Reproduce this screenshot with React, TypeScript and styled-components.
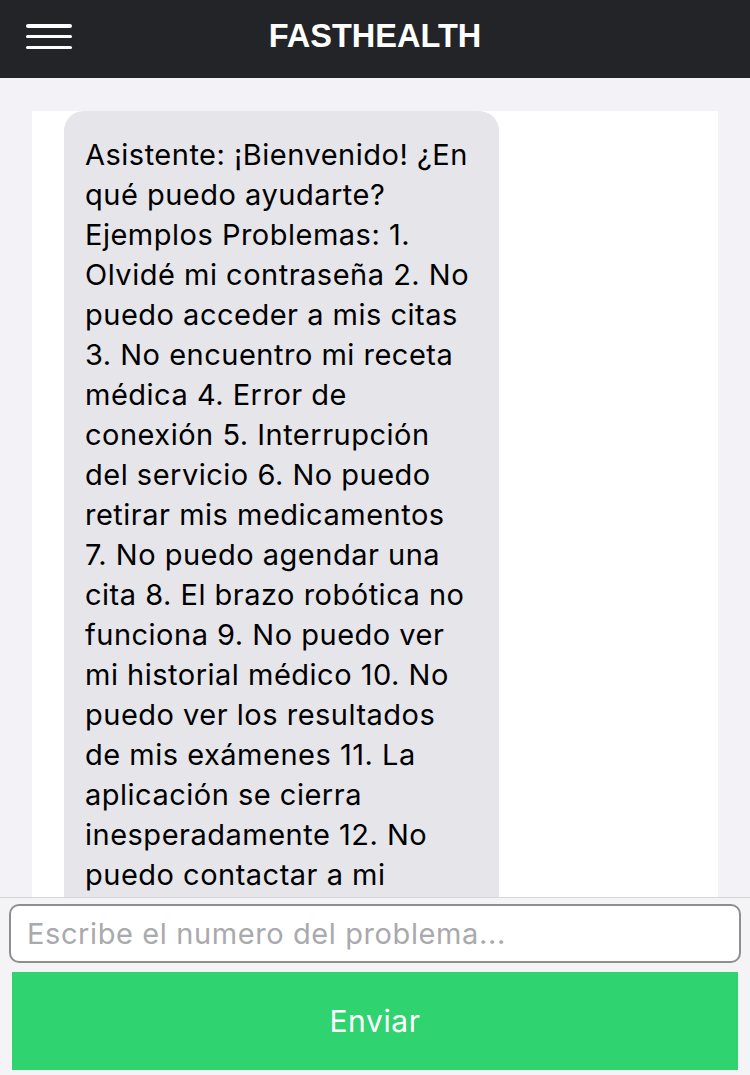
import React from "react";
import styled, { createGlobalStyle } from "styled-components";

const GlobalStyle = createGlobalStyle`
  html, body { margin: 0; padding: 0; }
  body { font-family: Inter, "Liberation Sans", Arial, sans-serif; background: #f2f2f7; }
  * { box-sizing: border-box; }
`;

const Screen = styled.div`
  width: 750px;
  height: 1075px;
  display: flex;
  flex-direction: column;
  background: #f2f2f7;
  overflow: hidden;
`;

const Header = styled.header`
  height: 78px;
  flex: none;
  background: #232428;
  display: grid;
  grid-template-columns: 100px 1fr 100px;
  align-items: center;
`;

const MenuButton = styled.button`
  align-self: start;
  width: 46px;
  height: 25px;
  margin: 24px 0 0 26px;
  padding: 0;
  border: none;
  background: transparent;
  display: flex;
  flex-direction: column;
  justify-content: space-between;
`;

const MenuLine = styled.span`
  display: block;
  height: 3.5px;
  width: 100%;
  border-radius: 2px;
  background: #ffffff;
`;

const Title = styled.h1`
  margin: -6px 0 0 0;
  text-align: center;
  color: #ffffff;
  font-family: "Liberation Sans", Arial, sans-serif;
  font-weight: 700;
  font-size: 32.5px;
`;

const ChatArea = styled.main`
  flex: 1;
  min-height: 0;
  padding: 33px 32px 0 32px;
  display: flex;
`;

const ChatPanel = styled.section`
  flex: 1;
  background: #ffffff;
  overflow: hidden;
  padding-left: 32px;
`;

const Bubble = styled.div`
  width: 435px;
  background: #e5e5ea;
  border-radius: 20px;
  padding: 24px 0 24px 21px;
  color: #000000;
  font-family: Inter, "Liberation Sans", Arial, sans-serif;
  font-size: 29px;
  letter-spacing: 0.5px;
  line-height: 40px;
`;

const BubbleLine = styled.span`
  display: block;
  white-space: nowrap;
`;

const Footer = styled.footer`
  flex: none;
  border-top: 1px solid #d6d6d8;
  background: #f4f4f6;
  padding: 6px 9px 5px 9px;
  display: flex;
  flex-direction: column;
  gap: 9px;
`;

const Input = styled.input`
  height: 59px;
  width: 100%;
  border: 2px solid #8e8e93;
  border-radius: 10px;
  background: #ffffff;
  padding: 0 16px;
  font-family: Inter, "Liberation Sans", Arial, sans-serif;
  font-size: 29px;
  letter-spacing: 0.6px;
  color: #000;
  outline: none;
  &::placeholder { color: #a9a9ae; }
`;

const SendButton = styled.button`
  height: 98px;
  margin: 0 3px;
  border: none;
  background: #2fd36f;
  color: #ffffff;
  font-family: Inter, "Liberation Sans", Arial, sans-serif;
  font-size: 30px;
  letter-spacing: 0.6px;
  padding: 0;
`;

const lines = [
  "Asistente: ¡Bienvenido! ¿En",
  "qué puedo ayudarte?",
  "Ejemplos Problemas: 1.",
  "Olvidé mi contraseña 2. No",
  "puedo acceder a mis citas",
  "3. No encuentro mi receta",
  "médica 4. Error de",
  "conexión 5. Interrupción",
  "del servicio 6. No puedo",
  "retirar mis medicamentos",
  "7. No puedo agendar una",
  "cita 8. El brazo robótica no",
  "funciona 9. No puedo ver",
  "mi historial médico 10. No",
  "puedo ver los resultados",
  "de mis exámenes 11. La",
  "aplicación se cierra",
  "inesperadamente 12. No",
  "puedo contactar a mi",
];

export default function App() {
  return (
    <>
      <GlobalStyle />
      <Screen>
        <Header>
          <MenuButton aria-label="menu">
            <MenuLine />
            <MenuLine />
            <MenuLine />
          </MenuButton>
          <Title>FASTHEALTH</Title>
          <div />
        </Header>
        <ChatArea>
          <ChatPanel>
            <Bubble>
              {lines.map((l, i) => (
                <BubbleLine key={i}>{l}</BubbleLine>
              ))}
            </Bubble>
          </ChatPanel>
        </ChatArea>
        <Footer>
          <Input placeholder="Escribe el numero del problema..." />
          <SendButton>Enviar</SendButton>
        </Footer>
      </Screen>
    </>
  );
}
